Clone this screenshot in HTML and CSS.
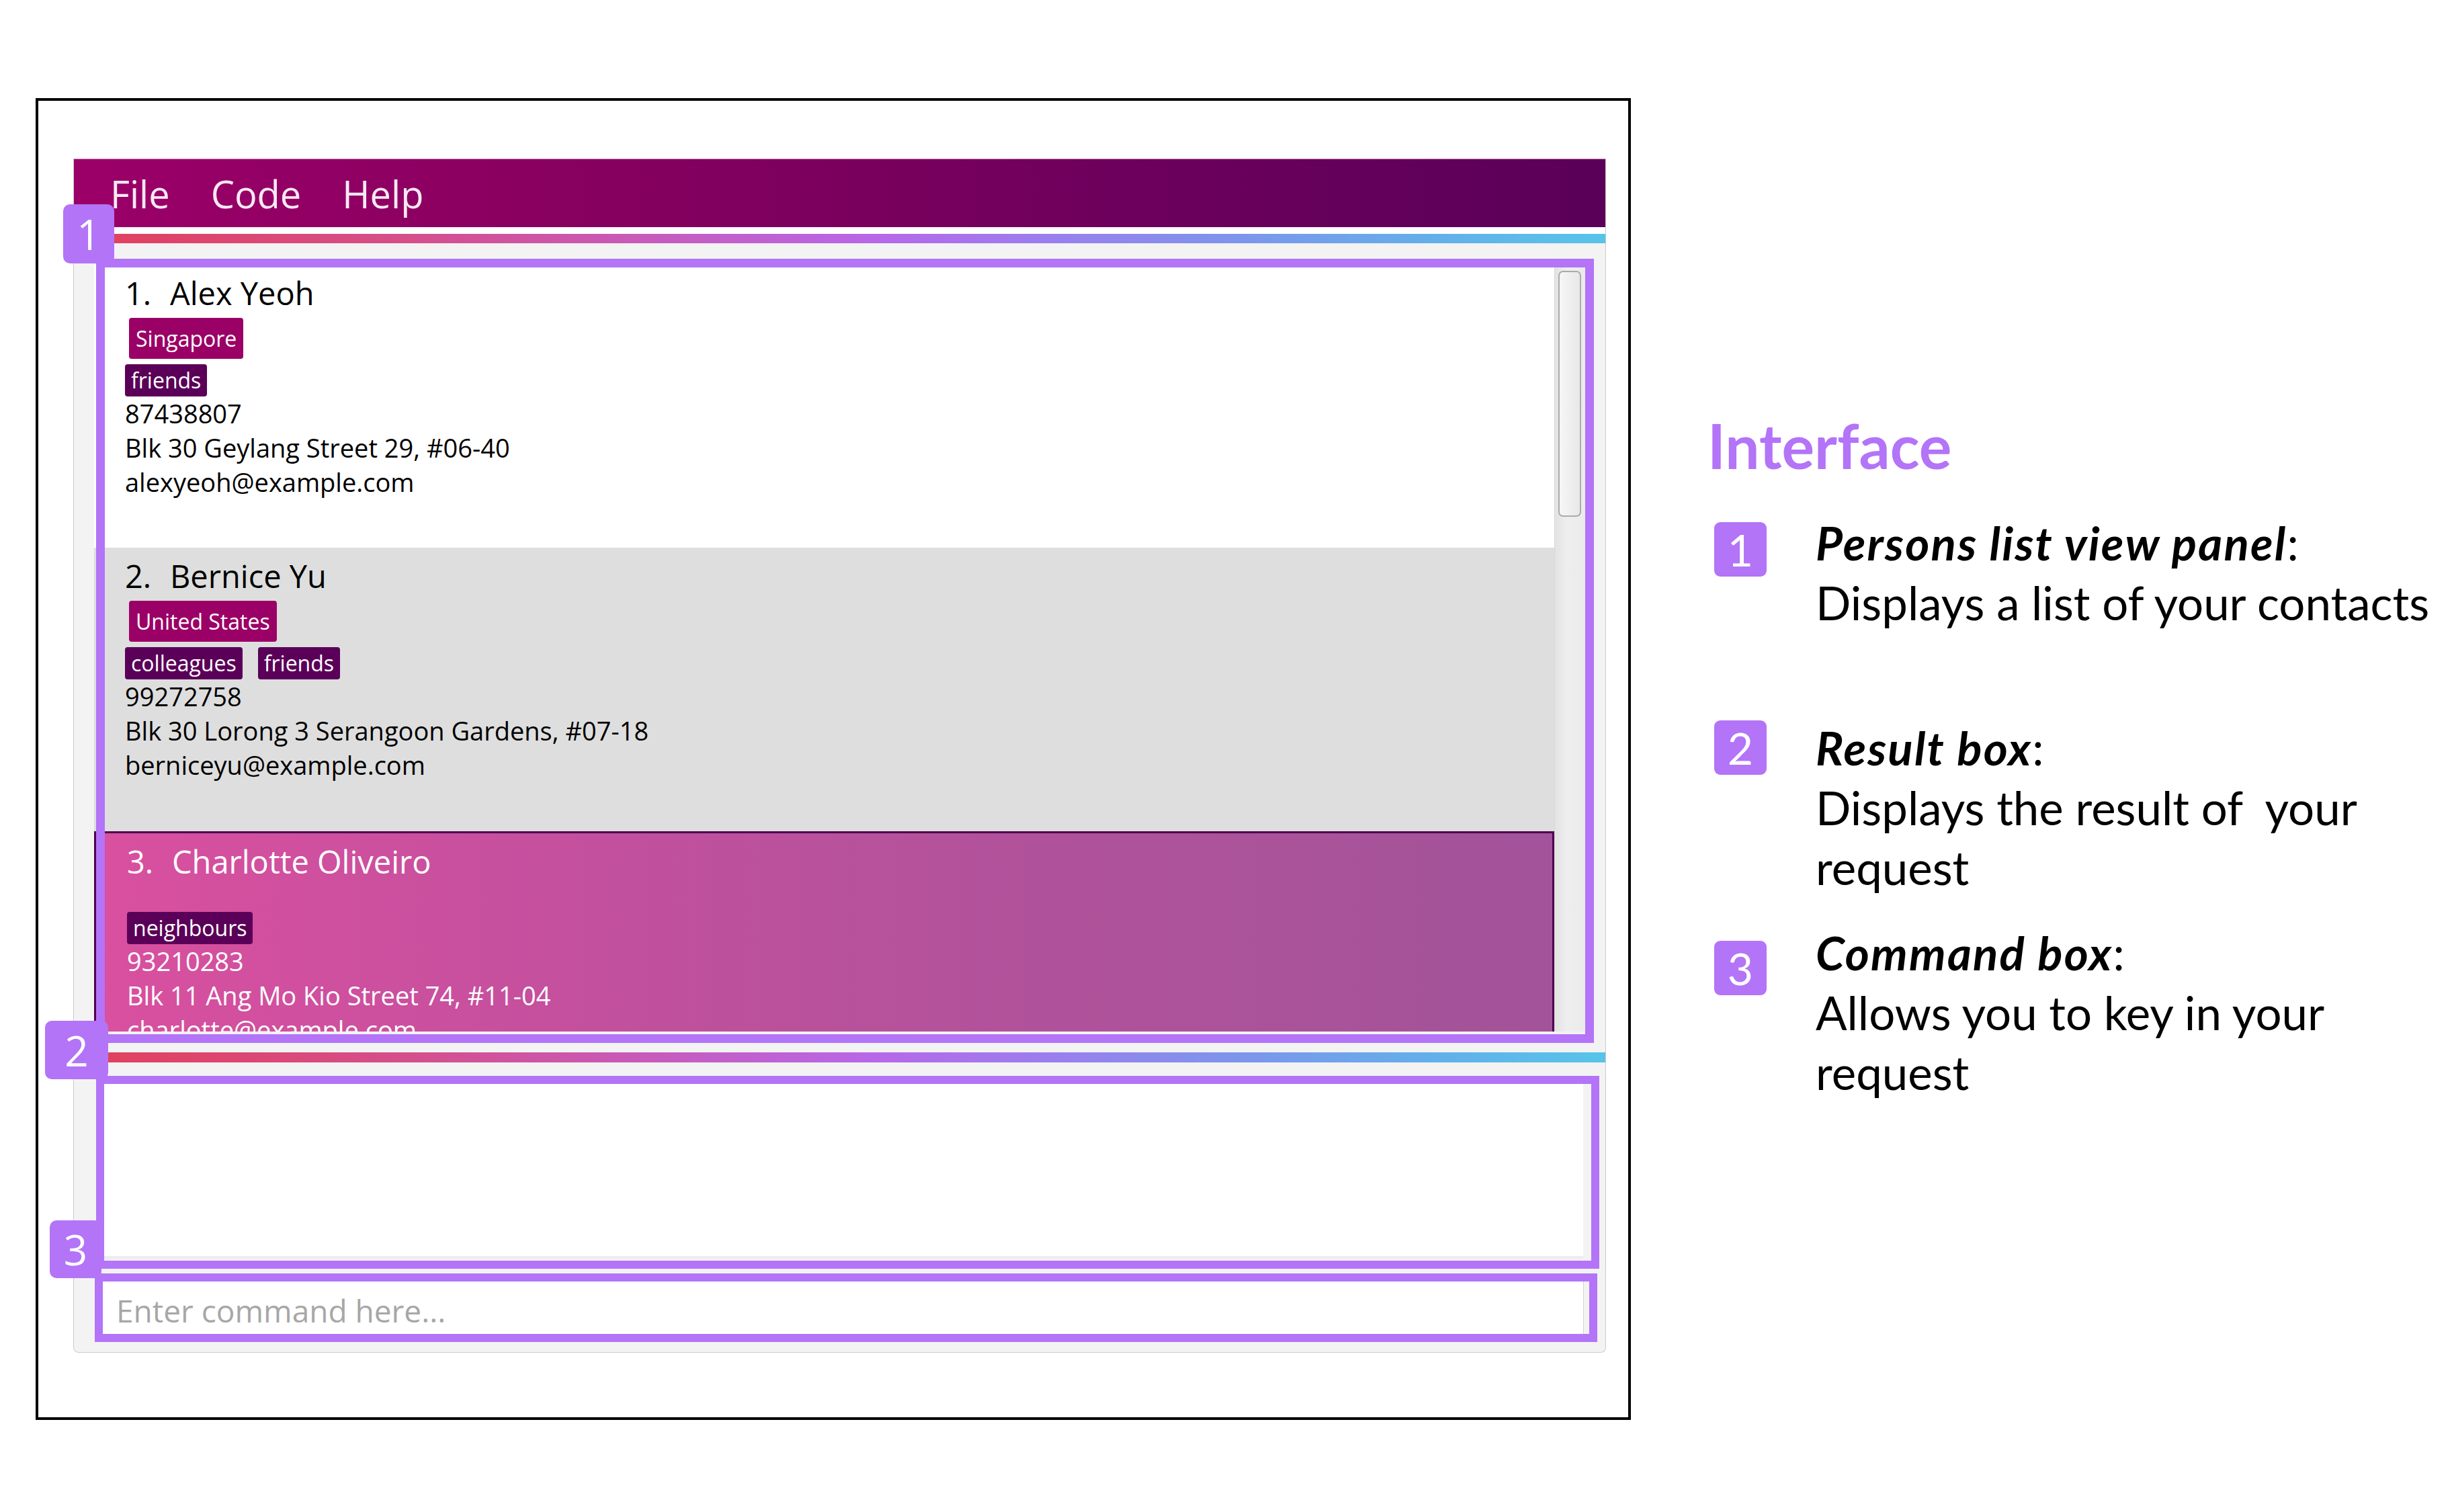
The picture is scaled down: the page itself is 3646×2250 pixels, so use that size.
FILE: index.html
```html
<!DOCTYPE html>
<html lang="en">
<head>
<meta charset="utf-8">
<title>Interface</title>
<link rel="stylesheet" href="styles.css">
</head>
<body>
<div class="page">
  <div class="frame">
    <div class="window">
      <div class="menubar">
        <span class="menu-item">File</span>
        <span class="menu-item">Code</span>
        <span class="menu-item">Help</span>
      </div>
      <div class="strip"></div>
      <div class="rainbow"></div>
      <div class="list">
        <div class="cells">
          <div class="cell cell-white">
            <div class="name-row"><span class="idx">1.</span><span class="name">Alex Yeoh</span></div>
            <div class="country-row"><span class="country">Singapore</span></div>
            <div class="tags"><span class="tag">friends</span></div>
            <div class="line">87438807</div>
            <div class="line">Blk 30 Geylang Street 29, #06-40</div>
            <div class="line">alexyeoh@example.com</div>
          </div>
          <div class="cell cell-grey">
            <div class="name-row"><span class="idx">2.</span><span class="name">Bernice Yu</span></div>
            <div class="country-row"><span class="country">United States</span></div>
            <div class="tags"><span class="tag">colleagues</span><span class="tag">friends</span></div>
            <div class="line">99272758</div>
            <div class="line">Blk 30 Lorong 3 Serangoon Gardens, #07-18</div>
            <div class="line">berniceyu@example.com</div>
          </div>
          <div class="cell cell-selected">
            <div class="name-row"><span class="idx">3.</span><span class="name">Charlotte Oliveiro</span></div>
            <div class="country-row country-empty"></div>
            <div class="tags"><span class="tag">neighbours</span></div>
            <div class="line">93210283</div>
            <div class="line">Blk 11 Ang Mo Kio Street 74, #11-04</div>
            <div class="line">charlotte@example.com</div>
          </div>
        </div>
        <div class="scrolltrack"><div class="thumb"></div></div>
      </div>
      <div class="rainbow rainbow-low"></div>
      <div class="result"></div>
      <div class="command"><span class="placeholder">Enter command here...</span></div>
    </div>
  </div>

  <div class="legend">
    <h1 class="legend-title">Interface</h1>
    <div class="item item-1">
      <div class="badge">1</div>
      <div class="item-text">
        <div><b><i>Persons list view panel</i></b>:</div>
        <div>Displays a list of your contacts</div>
      </div>
    </div>
    <div class="item item-2">
      <div class="badge">2</div>
      <div class="item-text">
        <div><b><i>Result box</i></b>:</div>
        <div>Displays the result of&nbsp; your</div>
        <div>request</div>
      </div>
    </div>
    <div class="item item-3">
      <div class="badge">3</div>
      <div class="item-text">
        <div><b><i>Command box</i></b>:</div>
        <div>Allows you to key in your</div>
        <div>request</div>
      </div>
    </div>
  </div>

  <div class="ann-box ann-box-1"></div>
  <div class="ann-box ann-box-2"></div>
  <div class="ann-box ann-box-3"></div>
  <div class="ann-badge ann-badge-1">1</div>
  <div class="ann-badge ann-badge-2">2</div>
  <div class="ann-badge ann-badge-3">3</div>
</div>
</body>
</html>
```

FILE: styles.css
```css
* { box-sizing: border-box; }

html, body {
  margin: 0;
  padding: 0;
  background: #ffffff;
}

body {
  width: 3646px;
  height: 2250px;
  overflow: hidden;
}

.page {
  position: relative;
  width: 3646px;
  height: 2250px;
  display: flex;
  align-items: flex-start;
  padding: 146px 0 0 53px;
}

/* ---------- left figure ---------- */
.frame {
  width: 2374px;
  height: 1967px;
  border: 4px solid #000;
  background: #fff;
  padding: 86px 0 0 52px;
  flex: none;
}

.window {
  width: 2281px;
  height: 1777px;
  background: #f3f3f3;
  border: 1px solid #cbcbcb;
  border-top: none;
  border-radius: 0 0 8px 8px;
  display: flex;
  flex-direction: column;
  font-family: "Open Sans", "Noto Sans", sans-serif;
  overflow: hidden;
}

.menubar {
  height: 102px;
  flex: none;
  display: flex;
  align-items: center;
  gap: 61px;
  padding-left: 54px;
  background: linear-gradient(to right, #9b0068, #86005f 35%, #6c005c 70%, #5a0059);
  border-top: 1px solid #c98bc0;
}

.menu-item {
  color: #f9e9f5;
  font-size: 56px;
  line-height: 1;
}

.strip {
  height: 10px;
  flex: none;
  background: #ffffff;
}

.rainbow {
  height: 14px;
  flex: none;
  background: linear-gradient(to right, #e2405a 0%, #d54f8c 22%, #c75bbd 38%, #b867e8 52%, #9a7fee 64%, #7d95ec 76%, #64aeea 88%, #57c4e9 100%);
}

.rainbow-low {
  height: 15px;
  margin-top: 31px;
}

.list {
  height: 1141px;
  flex: none;
  margin: 32px 30px 0 30px;
  display: flex;
  background: #fff;
  overflow: hidden;
}

.cells {
  flex: 1;
  display: flex;
  flex-direction: column;
  overflow: hidden;
}

.cell {
  flex: none;
  height: 421px;
  padding: 11px 0 0 46px;
  color: #000;
}

.cell-white { background: #ffffff; }
.cell-grey { background: #dedede; height: 422px; }

.cell-selected {
  height: 320px;
  border: 3px solid #4e0050;
  border-bottom: none;
  background: linear-gradient(to right, #d9509f, #c2509e 35%, #b0529b 65%, #a25399);
  color: #ffffff;
}

.name-row {
  height: 62px;
  line-height: 62px;
  font-size: 47px;
  white-space: nowrap;
}

.idx {
  display: inline-block;
  width: 67px;
}

.country-row {
  margin-top: 6px;
  height: 61px;
}

.country-empty { height: 30px; }

.country {
  display: inline-block;
  height: 61px;
  line-height: 61px;
  padding: 0 10px;
  margin-left: 6px;
  font-size: 32px;
  color: #fff;
  background: #9b0066;
  border-radius: 4px;
}

.tags {
  margin-top: 8px;
  height: 48px;
  display: flex;
  gap: 23px;
}

.tag {
  height: 48px;
  line-height: 48px;
  padding: 0 9px;
  font-size: 32px;
  color: #fff;
  background: #5a0058;
  border-radius: 4px;
}

.line {
  font-size: 38px;
  line-height: 51px;
  white-space: nowrap;
}

.scrolltrack {
  width: 46px;
  flex: none;
  background: linear-gradient(to right, #e3e3e3, #eeeeee 40%, #ebebeb);
  border-left: 1px solid #d8d8d8;
  padding: 9px 6px 0 5px;
}

.thumb {
  height: 366px;
  border: 2px solid #ababab;
  border-radius: 7px;
  background: linear-gradient(to right, #f6f6f6, #e8e8e8);
}

.result {
  height: 273px;
  flex: none;
  margin: 20px 33px 0 33px;
  background: #ffffff;
  border-bottom: 5px solid #efedf4;
}

.command {
  height: 98px;
  flex: none;
  margin: 23px 32px 0 32px;
  background: #ffffff;
  border: 1px solid #d4d4d4;
  padding: 8px 0 0 30px;
}

.placeholder {
  display: block;
  font-size: 46px;
  line-height: 88px;
  color: #a7a7a7;
  white-space: nowrap;
}

/* ---------- annotation overlays ---------- */
.ann-box {
  position: absolute;
  border: 13px solid #b374f7;
}

.ann-box-1 { left: 143px; top: 385px; width: 2229px; height: 1167px; }
.ann-box-2 { left: 143px; top: 1601px; width: 2237px; height: 287px; border-width: 12px; }
.ann-box-3 { left: 141px; top: 1895px; width: 2236px; height: 102px; border-width: 12px; }

.ann-badge {
  position: absolute;
  background: #b374f7;
  color: #fff;
  border-radius: 10px;
  display: flex;
  align-items: center;
  justify-content: center;
  font-family: "Open Sans", "Noto Sans", sans-serif;
  font-size: 62px;
  line-height: 1;
}

.ann-badge-1 { left: 94px; top: 304px; width: 76px; height: 88px; }
.ann-badge-2 { left: 67px; top: 1519px; width: 94px; height: 87px; }
.ann-badge-3 { left: 74px; top: 1816px; width: 77px; height: 86px; }

/* ---------- legend ---------- */
.legend {
  flex: none;
  margin-left: 118px;
  font-family: Lato, "Open Sans", sans-serif;
  color: #000;
  white-space: nowrap;
}

.legend-title {
  margin: 465px 0 0 -4px;
  font-size: 91px;
  line-height: 104px;
  font-weight: 700;
  color: #b374f7;
}

.item {
  display: flex;
  align-items: flex-start;
  gap: 73px;
  margin-left: 6px;
}

.item-1 { margin-top: 48px; }
.item-2 { margin-top: 127px; }
.item-3 { margin-top: 38px; }

.badge {
  flex: none;
  width: 78px;
  height: 81px;
  border-radius: 9px;
  background: #b374f7;
  color: #fff;
  display: flex;
  align-items: center;
  justify-content: center;
  font-size: 66px;
  line-height: 1;
}

.item-1 .badge { margin-top: 14px; }
.item-2 .badge { margin-top: 4px; }
.item-3 .badge { margin-top: 27px; }

.item-text {
  font-size: 69px;
  line-height: 89px;
}

.item-text b {
  font-weight: 700;
  letter-spacing: 2.2px;
}
```
